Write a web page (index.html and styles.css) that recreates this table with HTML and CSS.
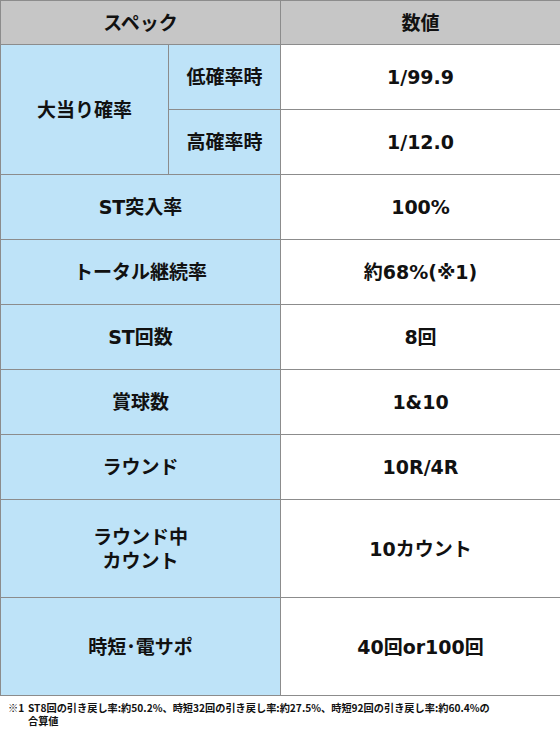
FILE: index.html
```html
<!DOCTYPE html>
<html lang="ja">
<head>
<meta charset="utf-8">
<link rel="stylesheet" href="styles.css">
</head>
<body>
<table class="spec">
  <colgroup>
    <col class="c1">
    <col class="c2">
    <col class="c3">
  </colgroup>
  <thead>
    <tr class="head">
      <th colspan="2">スペック</th>
      <th>数値</th>
    </tr>
  </thead>
  <tbody>
    <tr class="r">
      <th rowspan="2" class="label">大当り確率</th>
      <th class="label">低確率時</th>
      <td>1/99.9</td>
    </tr>
    <tr class="r">
      <th class="label">高確率時</th>
      <td>1/12.0</td>
    </tr>
    <tr class="r">
      <th colspan="2" class="label">ST突入率</th>
      <td>100%</td>
    </tr>
    <tr class="r">
      <th colspan="2" class="label">トータル継続率</th>
      <td>約68%(※1)</td>
    </tr>
    <tr class="r">
      <th colspan="2" class="label">ST回数</th>
      <td>8回</td>
    </tr>
    <tr class="r">
      <th colspan="2" class="label">賞球数</th>
      <td>1&amp;10</td>
    </tr>
    <tr class="r">
      <th colspan="2" class="label">ラウンド</th>
      <td>10R/4R</td>
    </tr>
    <tr class="tall">
      <th colspan="2" class="label">ラウンド中<br>カウント</th>
      <td>10カウント</td>
    </tr>
    <tr class="tall">
      <th colspan="2" class="label">時短･電サポ</th>
      <td>40回or100回</td>
    </tr>
  </tbody>
</table>
<p class="note"><span class="mark">※1</span>ST8回の引き戻し率:約50.2%、時短32回の引き戻し率:約27.5%、時短92回の引き戻し率:約60.4%の合算値</p>
</body>
</html>
```
FILE: styles.css
```css
html, body {
  margin: 0;
  padding: 0;
  background: #ffffff;
}
body {
  font-family: "DejaVu Sans", "Noto Sans CJK JP", sans-serif;
  color: #111111;
}
.spec {
  width: 560px;
  border-collapse: collapse;
  table-layout: fixed;
}
.c1 { width: 168px; }
.c2 { width: 112px; }
.c3 { width: 280px; }
.spec th,
.spec td {
  border: 1px solid #8c8c8c;
  padding: 0;
  text-align: center;
  vertical-align: middle;
  font-size: 19px;
  font-weight: bold;
  line-height: 24px;
}
.head th {
  background: #c6c6c6;
  height: 43px;
}
.label {
  background: #bee3f8;
}
.r th, .r td {
  height: 64px;
}
.tall th, .tall td {
  height: 97px;
}
.spec td {
  background: #ffffff;
}
.note {
  margin: 5px 0 0 0;
  padding-left: 28px;
  text-indent: -20px;
  font-family: "Noto Sans CJK JP", sans-serif;
  font-size: 10.2px;
  font-weight: bold;
  line-height: 13px;
  width: 470px;
}
.mark {
  display: inline-block;
  width: 20px;
  text-indent: 0;
}
```
